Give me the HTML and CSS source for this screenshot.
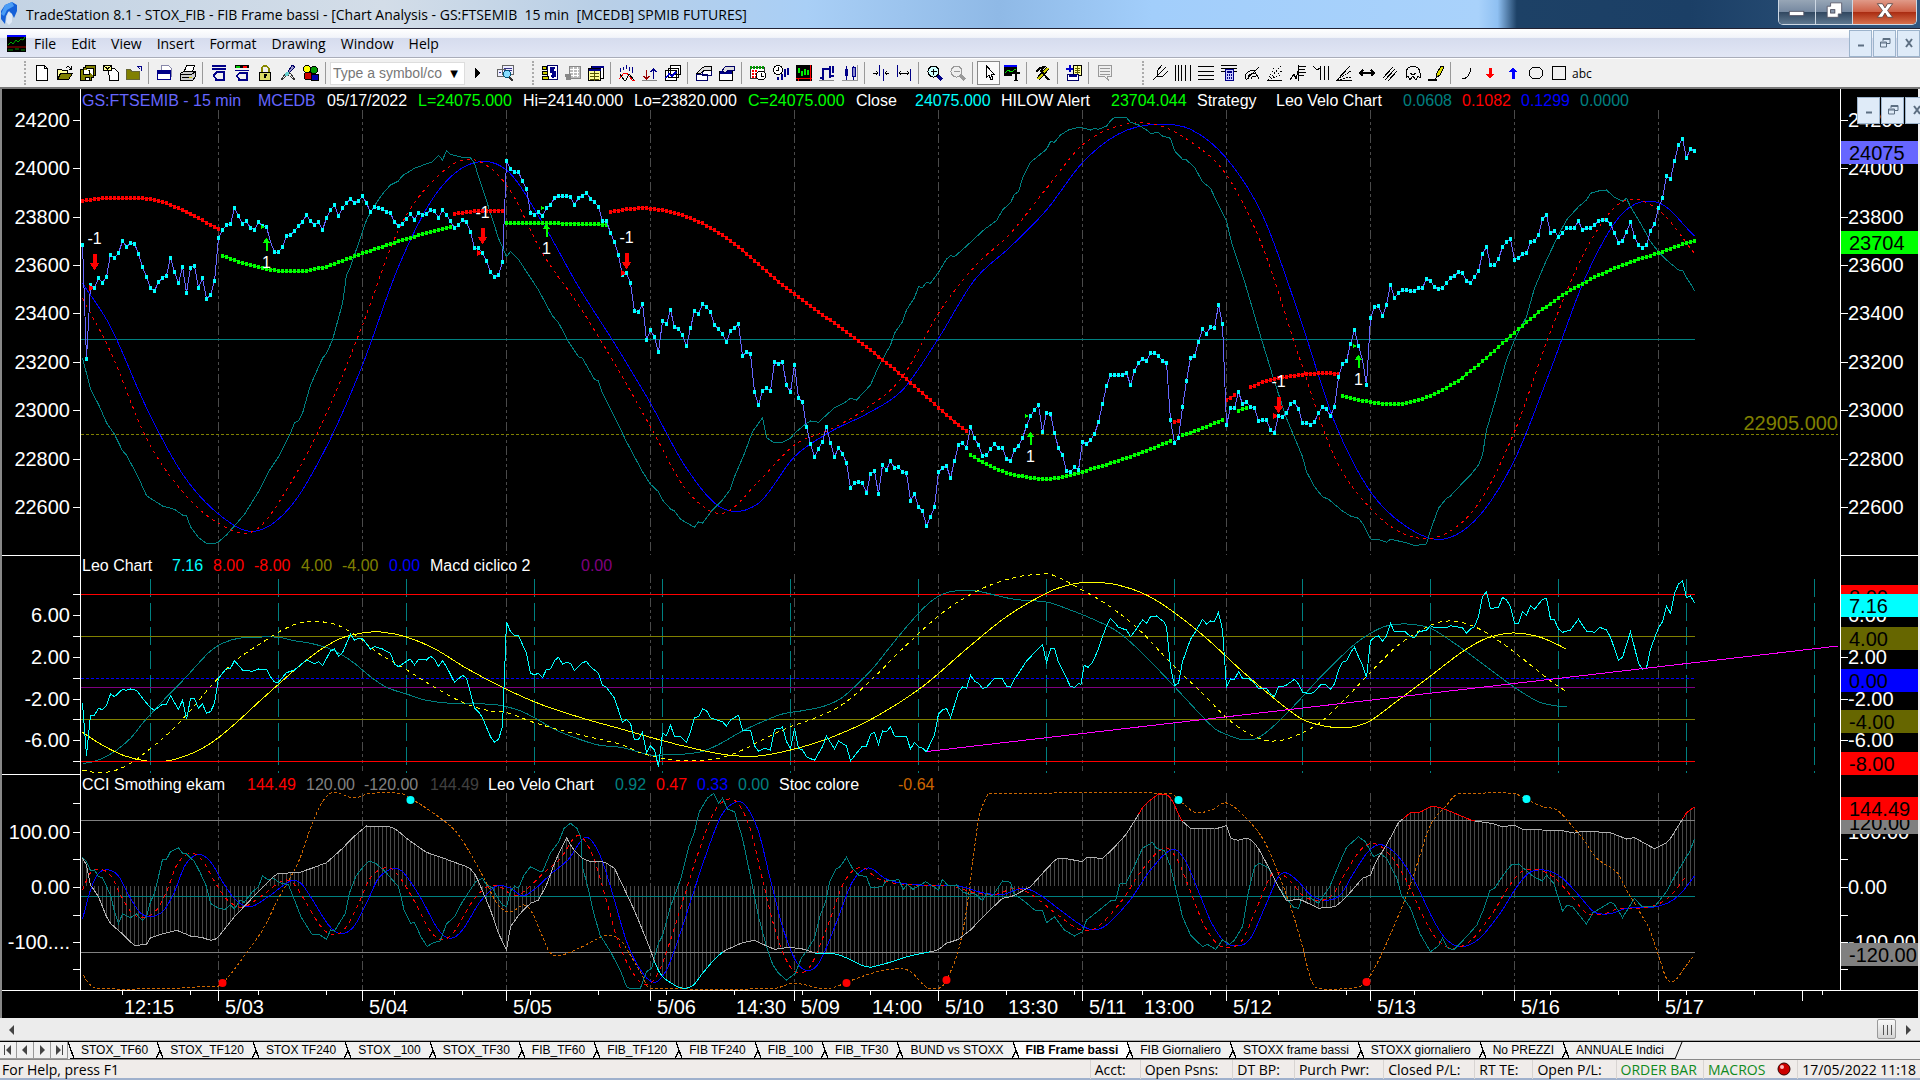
FILE: index.html
```html
<!DOCTYPE html>
<html lang="en">
<head>
  <meta charset="UTF-8">
  <title>TradeStation 8.1 - STOX_FIB</title>
  <meta name="viewport" content="width=device-width, initial-scale=1.0">
  <link rel="stylesheet" href="styles.css">
</head>
<body>
  <header class="titlebar">
    <svg class="app-logo" viewBox="0 0 18 24"><path d="M5 3 L12 0 L17 3 L17 9 L14 16 L12 12 L9 9 L6 14 L5 22 L1 17 L1 9 Z" fill="#1560d8"/><path d="M5 3 L12 0 L14 4 L7 8 L4 14 L1 12 Z" fill="#4a9cf5"/><path d="M8 10 L12 12 L12 20 L9 23 L6 20 Z" fill="#dfe9f7"/></svg>
    <h1>TradeStation 8.1 - STOX_FIB - FIB Frame bassi - [Chart Analysis - GS:FTSEMIB&nbsp; 15 min&nbsp; [MCEDB] SPMIB FUTURES]</h1>
    <div class="window-buttons">
      <button aria-label="Minimize"><svg viewBox="0 0 20 20"><rect x="1" y="11" width="17" height="5" fill="#fff" stroke="#556" /></svg></button>
      <button aria-label="Restore"><svg viewBox="0 0 20 20"><path d="M6 1h13v13h-4v4H2V5h4z" fill="#fff" stroke="#556"/><rect x="6" y="9" width="5" height="4" fill="#8a98ac" stroke="#445"/></svg></button>
      <button class="close" aria-label="Close"><svg viewBox="0 0 20 20"><path d="M1 2h6l3 5 3-5h6l-6 8 6 8h-6l-3-5-3 5H1l6-8z" fill="#fff" stroke="#544"/></svg></button>
    </div>
  </header>

  <nav class="menubar">
    <svg class="doc-icon" viewBox="0 0 19 17"><rect width="19" height="17" fill="#000"/><rect width="19" height="2" fill="#00f"/><path d="M1 10l3-3 2 2 3-4 2 2 3-3 2 1 2-3" stroke="#0a0" fill="none"/><path d="M0 12h19" stroke="#a00"/><path d="M1 15h5m2-1h4m2 1h4" stroke="#080"/></svg>
    <button>File</button>
    <button>Edit</button>
    <button>View</button>
    <button>Insert</button>
    <button>Format</button>
    <button>Drawing</button>
    <button>Window</button>
    <button>Help</button>
    <div class="mdi-buttons">
      <button aria-label="Minimize chart"><svg viewBox="0 0 12 12"><path d="M3 8.500h6" stroke-width="2"/></svg></button>
      <button aria-label="Restore chart"><svg viewBox="0 0 12 12"><path d="M4 4V1.500h7v5H8M1.500 5h6v5h-6zM4 2.500h7M1 6h7"/></svg></button>
      <button aria-label="Close chart"><svg viewBox="0 0 12 12"><path d="M3 2l6 8M9 2l-6 8" stroke-width="2"/></svg></button>
    </div>
  </nav>

  <div class="toolbar">
    <i class="grip"></i>
    <button aria-label="New"><svg viewBox="0 0 16 16"><path d="M2.500.5h8l3 3v12h-11z" fill="#fff" stroke="#000"/><path d="M10.500.5v3h3" fill="none" stroke="#000"/></svg></button>
    <button aria-label="Open"><svg viewBox="0 0 16 16"><path d="M.5 14.500v-10h4l1 1h5v3" fill="#ffffa0" stroke="#000"/><path d="M.5 14.500l3-6h12l-4 6z" fill="#808000" stroke="#000"/><path d="M9 3c2-3 4-1 4.500 1m-2 0h3V1" fill="none" stroke="#000"/></svg></button>
    <button aria-label="Save all"><svg viewBox="0 0 16 16"><path d="M5.500.5h10v10h-2v2h-2v3H.5v-11h2.500v-2h2.500z" fill="#808000" stroke="#000"/><path d="M3.500 5v4h6V5M5 15v-3h4v3M5.500 3h8v8" fill="#fff" stroke="#000"/></svg></button>
    <button aria-label="New from mail"><svg viewBox="0 0 16 16"><path d="M5.500 3.500h6l4 4v8h-9z" fill="#fff" stroke="#000"/><path d="M.5.5h8v5h-8z" fill="#ffff90" stroke="#000"/><path d="M1 1l3.500 3L8 1" fill="none" stroke="#000"/></svg></button>
    <button aria-label="Close workspace"><svg viewBox="0 0 16 16"><path d="M.5 14.500v-10h4l1 2h8v8z" fill="#808000" stroke="#663"/><path d="M15 6V1h-4m0 0l3 3" fill="none" stroke="#008"/></svg></button>
    <i class="sep"></i>
    <button aria-label="Print preview"><svg viewBox="0 0 16 16"><path d="M4.500.5h7l3 3v8h-10z" fill="#fff" stroke="#88a"/><path d="M.5 5.500h13v9H.5z" fill="#fff" stroke="#008"/><path d="M1 7h12" stroke="#008" stroke-width="3"/></svg></button>
    <button aria-label="Print"><svg viewBox="0 0 16 16"><path d="M4.500 6l2-5.500h8l-2 6" fill="#fff" stroke="#000"/><path d="M.5 8.500l3-2h12v5l-3 4H.5z" fill="#ccc" stroke="#000"/><path d="M1 9h11l3-2M2 12h9" fill="none" stroke="#000"/><path d="M9 12h3" stroke="#cc0"/></svg></button>
    <i class="sep"></i>
    <button aria-label="Insert row"><svg viewBox="0 0 16 16"><path d="M1 1h14M1 4h14" stroke="#008" stroke-width="2"/><path d="M4 15h9V7H6M2 11l4-4M2 11l4 3" fill="none" stroke="#008" stroke-width="1.500"/></svg></button>
    <button aria-label="Insert colour row"><svg viewBox="0 0 16 16"><path d="M1 1.500h14" stroke="#000" stroke-width="3"/><path d="M2 1.500h4" stroke="#0c0" stroke-width="2"/><path d="M9 1.500h4" stroke="red" stroke-width="2"/><path d="M1 5h14" stroke="#008"/><path d="M4 15h9V8H6M2 11l4-3M2 11l4 3" fill="none" stroke="#008" stroke-width="1.500"/></svg></button>
    <button aria-label="Lock"><svg viewBox="0 0 16 16"><path d="M4.500 8V3l2-2h3l2 2v5" fill="none" stroke="#880" stroke-width="2"/><path d="M2.500 7.500h11v8h-11z" fill="#dd6" stroke="#000"/><path d="M8 9v4M6.500 10h3" stroke="#000" stroke-width="2"/></svg></button>
    <button aria-label="Data link"><svg viewBox="0 0 16 16"><path d="M8 7L12 0l3 2-5 5z" fill="#99c" stroke="#006"/><path d="M1 15l4-6 3-2 3 2 4 6M2 15l4-4m4 0l4 4M8 8v3" fill="none" stroke="#333"/><circle cx="7" cy="9" r="2" fill="#6cc"/></svg></button>
    <button aria-label="Shapes"><svg viewBox="0 0 16 16"><circle cx="4" cy="4" r="3.500" fill="#ff0" stroke="#000"/><circle cx="11" cy="5" r="3.500" fill="#090" stroke="#000"/><circle cx="5" cy="11" r="4" fill="#c00" stroke="#000"/><path d="M8 9h7v6.500H9z" fill="#00a" stroke="#000"/></svg></button>
    <i class="sep"></i>
    <div class="symbol-box">
      <input type="text" aria-label="Symbol" placeholder="Type a symbol/co">
      <button aria-label="Symbol list">▼</button>
    </div>
    <button class="go" aria-label="Go"><svg viewBox="0 0 16 16"><path d="M6 3l5 5-5 5z"/></svg></button>
    <button class="lookup" aria-label="Symbol lookup"><svg viewBox="0 0 18 16"><path d="M.5 4.500h8v7h-8zM5.500 .5h11v9h-11z" fill="#eef" stroke="#666"/><path d="M7 3h8M7 5h8M2 7h2" stroke="#338"/><circle cx="10" cy="9" r="3.500" fill="#8df" stroke="#057"/><path d="M12 12l4 3.500" stroke="#333" stroke-width="2"/></svg></button>
    <i class="grip"></i>
    <button aria-label="Order bar"><svg viewBox="0 0 16 16"><path d="M5.500.5h10v14h-10z" fill="#fff" stroke="#006"/><path d="M11 2v11m2-10H9v4h4v4H9" fill="none" stroke="#008" stroke-width="1.500"/><path d="M.5 1.500h4v3h-4zM.5 6.500h5v3h-5zM.5 11.500h6v3h-6z" fill="#cc0" stroke="#000"/></svg></button>
    <button aria-label="Trade manager" disabled><svg viewBox="0 0 16 16"><path d="M4 1h11v12H4z" fill="#bbb" stroke="#888"/><path d="M5 4h9M5 7h9M5 10h9M8 2v10M12 2v10" stroke="#fff"/><path d="M0 9h6v6H1z" fill="#888"/></svg></button>
    <button aria-label="Spreadsheet"><svg viewBox="0 0 16 16"><path d="M3.500 1.500h12v12h-12z" fill="#fff" stroke="#000"/><path d="M.5 3.500h12v12H.5z" fill="#ff9" stroke="#000"/><path d="M1 4.500h12M3.500 1.500h12" stroke="#008" stroke-width="2"/><path d="M2 8h9M2 11h9M2 14h9M6 6v10" stroke="#550"/></svg></button>
    <i class="sep"></i>
    <button aria-label="Indicator"><svg viewBox="0 0 16 16"><path d="M1.500 3v4M4.500 2v3M7.500 0v4M10.500 2v4M13.500 2v6" stroke="#008"/><path d="M0 14l5-6h3l5 7h3" fill="none" stroke="red"/><path d="M1 9l4 6h2l3-6 5 6" fill="none" stroke="#000"/></svg></button>
    <button aria-label="Strategy"><svg viewBox="0 0 16 16"><path d="M4.500 5v9M2 11l2.500 3L7 11" fill="none" stroke="#900" stroke-width="1.500"/><path d="M11.500 14V4M9 7l2.500-3L14 7" fill="none" stroke="#008" stroke-width="1.500"/><path d="M0 15.500h15" stroke="#888"/></svg></button>
    <button aria-label="Analysis techniques"><svg viewBox="0 0 16 16"><path d="M5.500.5h10v9h-10zM3.500 3.500h10v9h-10zM.5 5.500h11v10H.5z" fill="#fff" stroke="#000"/><path d="M1 13l3-4 3 2 4-4" fill="none" stroke="#00c" stroke-width="1.500"/></svg></button>
    <i class="sep"></i>
    <button aria-label="Format analysis"><svg viewBox="0 0 16 16"><path d="M6.500 3.500h9v7h-9zM.5 9.500h11v6H.5z" fill="#fff" stroke="#006"/><path d="M1 8l5-5 4-2h5v4H9L5 8z" fill="#ddd" stroke="#000"/></svg></button>
    <button aria-label="Format window"><svg viewBox="0 0 16 16"><path d="M.5 6.500h13v9H.5z" fill="#fff" stroke="#000"/><path d="M1 7.500h12" stroke="#008" stroke-width="3"/><path d="M3 6l3-4 4-1h5v4h-5L6 8z" fill="#ddd" stroke="#006"/></svg></button>
    <i class="sep"></i>
    <button aria-label="Calendar"><svg viewBox="0 0 16 16"><path d="M.5 2.500h14v11H.5z" fill="#fff" stroke="#333"/><path d="M0 2h15" stroke="#090" stroke-width="3" stroke-dasharray="2 1"/><path d="M2 6h6M2 9h4M2 12h4" stroke="red" stroke-width="2" stroke-dasharray="2 1"/><circle cx="11" cy="10.500" r="4.500" fill="#fff" stroke="#000"/><path d="M11 8v3h3" fill="none" stroke="#000"/></svg></button>
    <button aria-label="Session times"><svg viewBox="0 0 16 16"><circle cx="5" cy="5" r="4.500" fill="#fff" stroke="#000"/><path d="M5 2v3H3" fill="none" stroke="#000"/><path d="M4.500 12v3M8.500 9v6M11.500 4v8M14.500 3v7" stroke="#008" stroke-width="2"/></svg></button>
    <button aria-label="Chart colours"><svg viewBox="0 0 16 16"><path d="M0 0h16v16H0z"/><path d="M0 13h16M2 16v-3m12-13v16" stroke="red"/><path d="M3 3v5M6 6v5M9 4v6M12 5v5" stroke="#0e0" stroke-width="1.500"/></svg></button>
    <button aria-label="Bar chart"><svg viewBox="0 0 16 16"><path d="M4 3v12M11 1v12M1 13h3M4 4h7M11 11h4M14 1v7" stroke="#008" stroke-width="2"/><path d="M0 15.500h15" stroke="#888"/></svg></button>
    <button aria-label="Candles"><svg viewBox="0 0 16 16"><path d="M4.500 1v14M11.500 1v14" stroke="#008"/><path d="M3 4h3v7H3z" fill="#008"/><path d="M10 2h3v9h-3z" fill="#88c" stroke="#008"/><path d="M15.500 0v16M0 15.500h15" stroke="#999"/></svg></button>
    <i class="sep"></i>
    <button aria-label="Less spacing"><svg viewBox="0 0 16 16"><path d="M6.500 0v11M10.500 4v12" stroke="#008"/><path d="M0 8h5M3 6l2 2-2 2M16 8h-4M14 6l-2 2 2 2" fill="none" stroke="#000"/></svg></button>
    <button aria-label="More spacing"><svg viewBox="0 0 16 16"><path d="M1.500 0v12M14.500 4v12" stroke="#008"/><path d="M3 8h10M5 6L3 8l2 2M11 6l2 2-2 2" fill="none" stroke="#000"/></svg></button>
    <i class="sep"></i>
    <button aria-label="Zoom in"><svg viewBox="0 0 16 16"><circle cx="6.500" cy="6.500" r="5.500" fill="#cff" stroke="#000"/><path d="M3.500 6.500h6M6.500 3.500v6" stroke="#000" stroke-width="1.500"/><path d="M11 11l4 4" stroke="#008" stroke-width="3"/></svg></button>
    <button aria-label="Zoom out" disabled><svg viewBox="0 0 16 16"><circle cx="6.500" cy="6.500" r="5.500" fill="#eee" stroke="#999"/><path d="M3.500 6.500h6" stroke="#999" stroke-width="1.500"/><path d="M11 11l4 4" stroke="#999" stroke-width="3"/></svg></button>
    <i class="sep"></i>
    <button class="pressed" aria-label="Pointer"><svg viewBox="0 0 16 16"><path d="M5.500 1v11l2.500-2 2 5 2-1-2-5h3z" fill="#fff" stroke="#000"/></svg></button>
    <button aria-label="Text tracking"><svg viewBox="0 0 16 16"><path d="M0 0h13v11H0z"/><path d="M0 1h13" stroke="#00f" stroke-width="2"/><path d="M1 8l3-3 3 2 5-3" fill="none" stroke="#0d0"/><path d="M8 7h8v9H8z" fill="#f0f0f0"/><path d="M8 8h8M12 8v8M10 15.500h4" stroke="#000" stroke-width="2"/></svg></button>
    <i class="sep"></i>
    <button aria-label="Tools"><svg viewBox="0 0 16 16"><path d="M3 14L13 3" stroke="#000" stroke-width="4"/><path d="M3 14L13 3" stroke="#cc0" stroke-width="2"/><path d="M1 7l4-4 4-1-3 4 8 9" fill="none" stroke="#000" stroke-width="2"/></svg></button>
    <i class="sep"></i>
    <button aria-label="Add to workspace"><svg viewBox="0 0 16 16"><path d="M3.500 0v7M0 3.500h7" stroke="#00c" stroke-width="2"/><path d="M7.500.5h8v10h-8z" fill="#ff9" stroke="#000"/><path d="M9 3h5M9 5h5M9 7h5M11.500 1v9" stroke="#660"/><path d="M1.500 9.500h11v6h-11z" fill="#fff" stroke="#006"/><path d="M3 11h8" stroke="#008" stroke-width="2"/></svg></button>
    <i class="sep"></i>
    <button aria-label="Notes" disabled><svg viewBox="0 0 16 16"><path d="M1.500.5h13v11h-4l1 4-4-4h-6z" fill="#eee" stroke="#999"/><path d="M3 3h10M3 6h10M3 9h10" stroke="#999"/></svg></button>
    <i class="grip far"></i>
    <button aria-label="Andrews pitchfork"><svg viewBox="0 0 16 16"><path d="M1 15L14 2M5 11V6l5-6M5 11h6l5-5" fill="none" stroke="#000"/></svg></button>
    <button aria-label="Cycle lines"><svg viewBox="0 0 16 16"><path d="M.5 0v16M3.500 0v16M6.500 0v16M10.500 0v16M15.500 0v16" stroke="#000"/></svg></button>
    <button aria-label="Horizontal lines"><svg viewBox="0 0 16 16"><path d="M0 1.500h16M0 6.500h16M0 10.500h16M0 14.500h16" stroke="#000"/></svg></button>
    <button aria-label="Price calculator"><svg viewBox="0 0 16 16"><path d="M0 .5h16M0 3.500h16M0 6.500h16" stroke="#000"/><path d="M4.500 4.500h8v11h-8z" fill="#ccf" stroke="#008"/><path d="M6 7h5M6 10h1m1 0h1m1 0h1M6 13h1m1 0h1m1 0h1" stroke="#008" stroke-width="2"/></svg></button>
    <button aria-label="Speed arcs"><svg viewBox="0 0 16 16"><path d="M1 14c0-6 4-9 9-9M4 14c0-4 3-6 7-6M7 14c0-2 2-3 5-3M2 15L15 2M10 5l5 9" fill="none" stroke="#000"/></svg></button>
    <button aria-label="Gann fan"><svg viewBox="0 0 16 16"><path d="M0 15.500h15" stroke="#000"/><path d="M1 15L14 1M1 15L15 6M1 15l14-5M1 15L8 1" stroke="#000" stroke-dasharray="1 2"/></svg></button>
    <button aria-label="Retracement"><svg viewBox="0 0 16 16"><path d="M0 15l4-6 2 5 3-12M8.500 0v16M9 1.500h7M9 4.500h6M9 7.500h7M9 10.500h5" fill="none" stroke="#000"/></svg></button>
    <button aria-label="Time extension"><svg viewBox="0 0 16 16"><path d="M0 1l4 4 3-2M7.500 1v14M11.500 1v14M15.500 1v14" fill="none" stroke="#000"/></svg></button>
    <button aria-label="Fan lines"><svg viewBox="0 0 16 16"><path d="M0 15.500h16M1 15L14 1" stroke="#000"/><path d="M1 15L15 6M1 15l14-3" stroke="#000" stroke-dasharray="2 1"/></svg></button>
    <button aria-label="Extend"><svg viewBox="0 0 16 16"><path d="M1 8h14M4 5L1 8l3 3M12 5l3 3-3 3" fill="none" stroke="#000" stroke-width="1.500"/></svg></button>
    <button aria-label="Parallel lines"><svg viewBox="0 0 16 16"><path d="M1 13L11 2M3 15L13 4M6 16L15 6" stroke="#000"/></svg></button>
    <button aria-label="Arc"><svg viewBox="0 0 16 16"><path d="M1 13V8c0-9 14-9 14 0v5M1 13l2-2 2 4 3-4 3 4 2-4 2 2M5 8l3 2 3-2" fill="none" stroke="#000"/></svg></button>
    <button aria-label="Pencil"><svg viewBox="0 0 16 16"><path d="M0 14.500h9" stroke="#000" stroke-width="2"/><path d="M8 13l1-5 4-7 3 1-4 8z" fill="#dd0" stroke="#000"/></svg></button>
    <i class="sep"></i>
    <button aria-label="Curve"><svg viewBox="0 0 16 16"><path d="M3 14c6 0 8-5 9-11" fill="none" stroke="#000"/></svg></button>
    <button aria-label="Arrow down"><svg viewBox="0 0 16 16"><path d="M6.500 3h3v6h3L8 14 3.500 9h3z" fill="red"/></svg></button>
    <button aria-label="Arrow up"><svg viewBox="0 0 16 16"><path d="M6.500 14h3V7h3L8 3 3.500 7h3z" fill="#00f"/></svg></button>
    <button aria-label="Ellipse"><svg viewBox="0 0 16 16"><ellipse cx="8" cy="8" rx="7" ry="6" fill="none" stroke="#000"/></svg></button>
    <button aria-label="Rectangle"><svg viewBox="0 0 16 16"><path d="M1.500 1.500h13v13h-13z" fill="none" stroke="#000"/></svg></button>
    <button class="abc" aria-label="Text">abc</button>
  </div>

  <main class="chart-window">
    <svg id="chart" viewBox="0 89 1920 929" role="img" aria-label="GS:FTSEMIB 15 min chart"></svg>
    <div class="mdi-buttons floating">
      <button aria-label="Minimize window"><svg viewBox="0 0 12 12"><path d="M3 8.500h6" stroke-width="2"/></svg></button>
      <button aria-label="Restore window"><svg viewBox="0 0 12 12"><path d="M4 4V1.500h7v5H8M1.500 5h6v5h-6zM4 2.500h7M1 6h7"/></svg></button>
      <button aria-label="Close window"><svg viewBox="0 0 12 12"><path d="M3 2l6 8M9 2l-6 8" stroke-width="2"/></svg></button>
    </div>
  </main>

  <div class="scrollbar">
    <button aria-label="Scroll left"><svg viewBox="0 0 10 10"><path d="M7 0v10L2 5z"/></svg></button>
    <button class="thumb" aria-label="Scroll position"><svg viewBox="0 0 10 10"><path d="M1.500 0v10M5.500 0v10M9.500 0v10" stroke="#555"/></svg></button>
    <button aria-label="Scroll right"><svg viewBox="0 0 10 10"><path d="M3 0v10l5-5z"/></svg></button>
  </div>

  <nav class="tabs">
    <div class="tab-nav">
      <button aria-label="First tab"><svg viewBox="0 0 10 10"><path d="M8 0v10L3 5zM1 0h1v10H1z"/></svg></button>
      <button aria-label="Previous tab"><svg viewBox="0 0 10 10"><path d="M7 0v10L2 5z"/></svg></button>
      <button aria-label="Next tab"><svg viewBox="0 0 10 10"><path d="M3 0v10l5-5z"/></svg></button>
      <button aria-label="Last tab"><svg viewBox="0 0 10 10"><path d="M2 0v10l5-5zM8 0h1v10H8z"/></svg></button>
    </div>
    <a href="#">STOX_TF60</a>
    <a href="#">STOX_TF120</a>
    <a href="#">STOX TF240</a>
    <a href="#">STOX _100</a>
    <a href="#">STOX_TF30</a>
    <a href="#">FIB_TF60</a>
    <a href="#">FIB_TF120</a>
    <a href="#">FIB TF240</a>
    <a href="#">FIB_100</a>
    <a href="#">FIB_TF30</a>
    <a href="#">BUND vs STOXX</a>
    <a href="#" class="active">FIB Frame bassi</a>
    <a href="#">FIB Giornaliero</a>
    <a href="#">STOXX frame bassi</a>
    <a href="#">STOXX giornaliero</a>
    <a href="#">No PREZZI</a>
    <a href="#">ANNUALE Indici</a>
    <svg class="tab-end" viewBox="0 0 8 17"><path d="M0 17L7 0"/></svg>
  </nav>

  <footer class="statusbar">
    <span class="help">For Help, press F1</span>
    <span>Acct:</span>
    <span>Open Psns:</span>
    <span>DT BP:</span>
    <span>Purch Pwr:</span>
    <span>Closed P/L:</span>
    <span>RT TE:</span>
    <span>Open P/L:</span>
    <span class="link">ORDER BAR</span>
    <span class="link">MACROS</span>
    <svg viewBox="0 0 14 14"><circle cx="7" cy="7" r="6" fill="#c00" stroke="#300"/><circle cx="5" cy="5" r="2" fill="#fbb"/></svg>
    <span class="clock">17/05/2022 11:18</span>
  </footer>

  <script src="chart.js"></script>
</body>
</html>
```
FILE: styles.css
```css
* {
  box-sizing: border-box;
}

body {
  margin: 0;
  display: flex;
  flex-direction: column;
  background: #f0f0f0;
  color: #000;
  font-family: "Open Sans", sans-serif;
  font-size: 14px;
}

button {
  padding: 0;
  border: none;
  background: none;
  color: inherit;
  font: inherit;
}

/* title bar */
.titlebar {
  display: flex;
  align-items: center;
  height: 29px;
  border-bottom: 1px solid #223;
  background: linear-gradient(90deg, #c3d3e4 0, #d3dde8 20%, #b9cfe6 31%, #a9cff6 42%, #8fb9e6 52%, #a2cefb 60%, #a9d2fb 77%, #8fc0f2 78%, #1d4166 79%, #1b3f66 88%, #31577f 100%);
}

.app-logo {
  width: 18px;
  height: 24px;
}

.titlebar h1 {
  flex: 1;
  margin: 0 0 0 8px;
  font-size: 14px;
  font-weight: normal;
  white-space: nowrap;
}

.window-buttons {
  display: flex;
  align-self: flex-start;
  height: 25px;
  margin-right: 3px;
  border: 1px solid #cdd8e4;
  border-top: none;
  border-radius: 0 0 5px 5px;
  overflow: hidden;
}

.window-buttons button {
  width: 37px;
  border-right: 1px solid #cdd8e4;
  background: linear-gradient(#97a6b6 0, #7588a0 50%, #30465f 50%, #5f7890 100%);
}

.window-buttons .close {
  width: 63px;
  border-right: none;
  background: linear-gradient(#e09a88 0, #cd5f45 50%, #a92a10 50%, #d8704c 100%);
}

.window-buttons svg {
  width: 18px;
  height: 17px;
}

/* menu */
.menubar {
  display: flex;
  align-items: center;
  gap: 15px;
  height: 29px;
  padding-left: 7px;
  border-bottom: 1px solid #a9adb9;
  background: linear-gradient(#fff 0, #f2f4fa 30%, #d6dcee 34%, #e2e7f5 100%);
}

.doc-icon {
  width: 19px;
  height: 17px;
  margin-right: -7px;
}

.mdi-buttons {
  display: flex;
  gap: 1px;
  height: 27px;
  margin-left: auto;
}

.mdi-buttons button {
  width: 23px;
  border: 1px solid #9db4cc;
  background: #dfebf8;
}

.mdi-buttons svg {
  width: 12px;
  height: 12px;
  fill: none;
  stroke: #5d6f82;
}

.mdi-buttons.floating {
  position: absolute;
  top: 8px;
  right: -8px;
}

/* toolbar */
.toolbar {
  display: flex;
  align-items: center;
  height: 31px;
  padding-left: 24px;
  border-top: 1px solid #fff;
  border-bottom: 2px solid #777;
  background: #f0f0f0;
}

.toolbar button {
  flex: none;
  width: 23px;
  height: 24px;
}

.toolbar button svg {
  display: block;
  width: 16px;
  height: 16px;
  margin: 0 auto;
  shape-rendering: crispEdges;
}

.toolbar .pressed {
  border: 1px solid #888;
  background: #fafafa;
}

.toolbar .abc {
  width: 24px;
  font-size: 12px;
}

.grip {
  width: 6px;
  height: 24px;
  border-left: 2px dotted #aaa;
}

.grip.far {
  margin-left: 26px;
}

.sep {
  width: 8px;
  height: 22px;
  background: linear-gradient(90deg, transparent 3px, #999 3px, #999 4px, transparent 4px);
}

.symbol-box {
  display: flex;
  width: 135px;
  height: 23px;
  border: 1px solid #ddd;
  background: #fff;
}

.symbol-box input {
  flex: 1;
  min-width: 0;
  padding: 0 0 0 2px;
  border: none;
  background: none;
  font: 14px "Liberation Sans", sans-serif;
}

.symbol-box input::placeholder {
  color: #777;
  opacity: 1;
}

.toolbar .symbol-box button {
  width: 20px;
  height: 21px;
  font: 10px "DejaVu Sans", sans-serif;
}

.toolbar .lookup {
  width: 36px;
  margin-right: 8px;
}

.toolbar .lookup svg {
  width: 18px;
}

/* chart */
.chart-window {
  position: relative;
  overflow: hidden;
  background: #000;
}

#chart {
  display: block;
  width: 100%;
  height: auto;
  font-family: "Liberation Sans", Arial, sans-serif;
}

#chart line,
#chart path,
#chart rect,
#chart polyline {
  shape-rendering: crispEdges;
}

#chart .legend {
  font-size: 16px;
}

#chart .axis,
#chart .mark {
  font-size: 20px;
  fill: #fff;
}

#chart .mark {
  font-size: 16px;
}

/* scrollbar */
.scrollbar {
  display: flex;
  align-items: center;
  height: 23px;
  border-bottom: 1px solid #aaa;
  background: #ececec;
}

.scrollbar button {
  width: 24px;
  height: 20px;
}

.scrollbar svg,
.tab-nav svg {
  width: 10px;
  height: 10px;
  fill: #444;
}

.scrollbar .thumb {
  width: 19px;
  margin-left: auto;
  border: 1px solid #999;
  border-radius: 2px;
  background: linear-gradient(#f8f8f8, #d4d4d4);
}

/* workspace tabs */
.tabs {
  display: flex;
  height: 19px;
  border-top: 1px solid #000;
  border-bottom: 1px solid #888;
  background: #f0f0f0;
  font: 12px/17px "Liberation Sans", Arial, sans-serif;
}

.tab-nav {
  display: flex;
  margin-right: 2px;
}

.tab-nav button {
  width: 17px;
  border: 1px solid #999;
  border-width: 0 1px 1px 0;
  line-height: 10px;
}

.tabs a {
  position: relative;
  padding: 0 11px;
  border-bottom: 1px solid #000;
  color: #000;
  text-decoration: none;
  white-space: nowrap;
}

/* slanted edges between two tabs */
.tabs a::before,
.tabs a::after {
  content: "";
  position: absolute;
  top: 0;
  left: -2px;
  width: 6px;
  height: 17px;
  background: linear-gradient(to top right, transparent 45%, #000 45%, #000 57%, transparent 57%);
}

.tabs a::after {
  top: 8px;
  left: -3px;
  width: 4px;
  height: 9px;
  background: linear-gradient(to bottom right, transparent 42%, #000 42%, #000 60%, transparent 60%);
}

.tabs a:first-of-type::after {
  display: none;
}

.tabs .active {
  background: #fff;
  font-weight: bold;
}

.tab-end {
  width: 8px;
  height: 17px;
  fill: none;
  stroke: #000;
}

/* status bar */
.statusbar {
  display: flex;
  align-items: center;
  height: 20px;
  border-bottom: 2px solid #9fb0cc;
  background: #f0ecea;
  white-space: nowrap;
}

.statusbar span {
  padding: 0 14px 0 4px;
  border-left: 1px solid #d8d4d2;
}

.statusbar .help {
  margin-right: auto;
  padding-left: 2px;
  border-left: none;
}

.statusbar .link {
  padding: 0 6px 0 4px;
  color: #118a1e;
}

.statusbar .clock {
  padding: 0 4px;
}

.statusbar svg {
  width: 14px;
  height: 14px;
  margin: 0 6px;
}
```
FILE: chart.js
```js
var svg = document.getElementById('chart');
var LAST = 403;                       // last bar
var LEFT = 80.5, RIGHT = 1840.5;

function el(name, attrs, text) {
  var e = document.createElementNS('http://www.w3.org/2000/svg', name);
  for (var k in attrs) e.setAttribute(k, attrs[k]);
  if (text !== undefined) e.textContent = text;
  svg.appendChild(e);
  return e;
}

// a bar is 4px wide, heights are kept in thirds of a pixel below the panel top
function bx(bar) { return 82.5 + bar * 4; }
function py(top, v) { return top + v / 3; }

function pairs(s) {
  return s.trim().split(/\s+/).map(function (p) { return p.split(',').map(Number); });
}

function hline(y, color, x2, dash) {
  var a = { x1: LEFT, x2: x2 || bx(LAST), y1: y, y2: y, stroke: color };
  if (dash) a['stroke-dasharray'] = dash;
  el('line', a);
}

function vline(x, y1, y2, color, dash) {
  var a = { x1: x, x2: x, y1: y1, y2: y2, stroke: color };
  if (dash) a['stroke-dasharray'] = dash;
  el('line', a);
}

function jagged(top, pts, color) {
  el('polyline', {
    points: pts.map(function (p) { return bx(p[0]) + ',' + py(top, p[1]).toFixed(1); }).join(' '),
    fill: 'none', stroke: color
  });
}

function smooth(top, pts, color, dash) {
  var q = pts.map(function (p) { return [bx(p[0]), py(top, p[1])]; });
  var d = 'M' + q[0];
  for (var i = 0; i < q.length - 1; i++) {
    var a = q[i - 1] || q[i], b = q[i], c = q[i + 1], e = q[i + 2] || c;
    // tangents are scaled to the segment so unequal steps do not overshoot
    var w = c[0] - b[0];
    var m1 = (c[1] - a[1]) / ((c[0] - a[0]) || 1), m2 = (e[1] - b[1]) / ((e[0] - b[0]) || 1);
    d += 'C' + [b[0] + w / 3, b[1] + m1 * w / 3, c[0] - w / 3, c[1] - m2 * w / 3, c[0], c[1]]
      .map(function (n) { return n.toFixed(1); }).join(' ');
  }
  var at = { d: d, fill: 'none', stroke: color };
  if (dash) at['stroke-dasharray'] = dash;
  el('path', at);
}

function at(pts, bar) {
  for (var i = 1; i < pts.length; i++) {
    if (bar <= pts[i][0]) {
      var a = pts[i - 1], b = pts[i];
      return a[1] + (b[1] - a[1]) * (bar - a[0]) / (b[0] - a[0]);
    }
  }
  return pts[pts.length - 1][1];
}

function every9(first, values) {
  return values.map(function (v, i) { return [first + i * 9, v]; });
}

function legend(y, items) {
  items.forEach(function (t) {
    el('text', { x: t[0], y: y, fill: t[1], 'class': 'legend' }, t[2]);
  });
}

function axis(top, labels, ticks) {
  labels.forEach(function (l) {
    el('text', { x: 70, y: py(top, l[0]) + 7, 'text-anchor': 'end', 'class': 'axis' }, l[2] || l[1]);
    el('text', { x: 1848, y: py(top, l[0]) + 7, 'class': 'axis' }, l[1]);
  });
  ticks.forEach(function (v) {
    var y = Math.round(py(top, v)) + 0.5;
    el('line', { x1: 73, x2: 80, y1: y, y2: y, stroke: '#fff' });
    el('line', { x1: 1841, x2: 1848, y1: y, y2: y, stroke: '#fff' });
  });
}

function tag(y, color, text) {
  el('rect', { x: 1841, y: y, width: 77, height: 23, fill: color });
  el('text', { x: 1849, y: y + 19, 'font-size': 20 }, text);
}

/* ---------- grid ---------- */
for (var b = 34; b <= 394; b += 36) {
  [[110, 555], [574, 771], [793, 990]].forEach(function (r) {
    vline(bx(b), r[0], r[1], '#4a4a4a', '9 3 3 3 3 3');
  });
}

/* ---------- price panel ---------- */
var P1 = 110;
hline(339.5, '#008080');
hline(434.5, '#808000', 1838, '3 2');

smooth(P1, [[0, 520]].concat(every9(7, [
  650, 893, 1092, 1212, 1264, 1190, 1010, 765, 470, 258, 162, 180, 338, 530, 700, 880, 1075, 1195, 1180,
  1040, 965, 912, 840, 685, 510, 410, 300, 158, 72, 43, 58, 145, 315, 610, 935, 1145, 1250, 1288, 1220,
  1050, 780, 495, 310, 278, 378])), '#0000ff');
smooth(P1, [[0, 565]].concat(every9(7, [
  725, 985, 1145, 1240, 1262, 1120, 910, 645, 360, 208, 148, 225, 430, 585, 760, 950, 1140, 1210, 1115,
  1005, 958, 895, 800, 610, 470, 370, 235, 105, 48, 43, 95, 195, 410, 735, 1040, 1195, 1275, 1275, 1180,
  965, 665, 415, 275, 300, 430])), '#ff0000', '3 4');

jagged(P1, pairs(`0,745 1,790 2,838 4,883 6,938 8,973 10,1022 11,1035 14,1103 16,1157 20,1188 23,1198 25,1215
26,1217 27,1250 29,1283 31,1300 33,1302 34,1295 36,1275 40.5,1213 44,1145 46.5,1085 49,1040 52,970 53,938 54,932
55,910 57,825 60,745 61,730 62.5,690 65,580 66,495 67,470 69,400 71,330 73,287 75,252 77,225 79,213 80,197
83,175 85,166 87.5,155 89,136 90,150 91,122 92,133 95,142 97,143 98,160 99,200 100,235 102,310 104,385 106,440
107,425 109,448 111,485 114,540 117.5,618 119,638 121.5,695 124,740 125,745 128,808 129,813 130,850 133,920
136,995 140,1085 142,1123 144,1145 145,1170 147,1197 148,1203 149.5,1228 151,1238 153,1252 154,1235 155,1240
157.5,1200 160,1170 162,1137 163,1100 165.5,1030 167.5,965 170,923 171,983 173,999 175,997 177,985 178,970
181,940 182,933 184,937 186,915 188,893 190.5,878 192,865 193.5,870 197,825 199,770 202,705 203,670 205,635
206,600 208,563 209,530 210,533 211,517 212,520 214,487 216,447 217,437 218,440 221,408 225.5,358 228.5,332
230,300 232,278 233,253 234,245 235,205 237,157 239,137 241,118 242,95 243,97 244.5,75 246.5,60 249,52 250.5,55
252,60 253,55 254,58 256,48 257,33 258,22 261,23 262,37 264,45 266,60 267,70 269,68 270,78 272,85 273,122
275,148 276,150 278,172 280,215 282,235 284,285 286,333 287.3,400 290.4,510 294.8,690 298,815 301,925 305,1040
306,1085 308,1130 310,1160 311.5,1168 315,1203 317,1218 319,1225 320,1240 322,1287 324,1288 326,1297 327,1288
329,1293 331,1298 333,1307 336,1302 337,1260 339,1195 341,1165 342,1158 343.5,1138 347,1095 349,1065 350,1035
351,960 353,880 356,750 358,690 361,620 363,535 366,450 369,375 371,330 374,290 376,270 377,250 379,243 381,240
383,262 385,273 386,265 387,290 389,330 390,350 392,395 394,425 396,450 399,480 400,481 401,503 402.5,530
403,543`), '#008080');

var price = [
  405, 747, 525, 534, 504, 518, 500, 434, 444, 429, 393, 410, 399, 401, 432, 471, 500, 534, 543, 516, 504, 497,
  443, 486, 518, 471, 548, 474, 467, 534, 504, 566, 555, 513, 384, 360, 345, 342, 294, 318, 342, 333, 354, 359,
  335, 348, 351, 395, 426, 426, 411, 378, 375, 363, 348, 336, 315, 333, 345, 335, 360, 324, 300, 285, 318, 294,
  279, 267, 279, 273, 258, 279, 306, 290, 294, 297, 306, 309, 336, 348, 342, 327, 312, 329, 308, 315, 312, 300,
  304, 323, 299, 315, 333, 354, 345, 330, 336, 366, 414, 414, 429, 453, 486, 501, 495, 456, 153, 177, 186, 186,
  213, 237, 308, 315, 306, 318, 294, 285, 264, 258, 258, 258, 260, 285, 264, 258, 248, 267, 276, 291, 333, 333,
  369, 396, 435, 495, 489, 519, 603, 606, 581, 690, 660, 682, 726, 633, 642, 600, 651, 657, 675, 708, 654, 603,
  612, 582, 591, 606, 645, 657, 672, 696, 663, 654, 642, 738, 726, 732, 846, 885, 843, 834, 843, 756, 762, 756,
  825, 846, 765, 863, 876, 951, 1001, 1041, 1016, 995, 951, 999, 1041, 1014, 1031, 1059, 1134, 1119, 1116, 1119,
  1149, 1091, 1083, 1152, 1065, 1080, 1053, 1074, 1071, 1086, 1089, 1172, 1152, 1191, 1203, 1248, 1221, 1191,
  1086, 1074, 1068, 1104, 1053, 1004, 999, 1014, 951, 984, 1005, 1038, 1035, 1017, 1002, 1014, 1014, 1047, 1053,
  1020, 1008, 984, 948, 918, 900, 885, 967, 909, 912, 969, 1014, 1035, 1083, 1086, 1071, 1080, 996, 1002, 990,
  972, 936, 882, 828, 795, 795, 795, 795, 789, 825, 783, 759, 747, 753, 729, 729, 738, 753, 759, 930, 999, 984,
  891, 813, 744, 738, 696, 657, 672, 651, 654, 585, 642, 945, 894, 894, 846, 882, 876, 891, 894, 933, 930, 930,
  960, 968, 918, 921, 909, 881, 876, 897, 939, 939, 944, 936, 909, 891, 897, 918, 891, 801, 762, 753, 702, 660,
  708, 750, 825, 624, 591, 588, 618, 585, 525, 564, 549, 540, 540, 543, 543, 534, 534, 507, 513, 531, 537, 534,
  519, 504, 498, 486, 489, 513, 519, 501, 483, 432, 411, 465, 465, 447, 411, 396, 387, 449, 444, 432, 429, 396,
  393, 375, 327, 315, 369, 363, 381, 369, 354, 354, 354, 333, 360, 354, 354, 345, 333, 330, 330, 342, 369, 399,
  393, 366, 336, 381, 405, 414, 405, 363, 342, 294, 264, 198, 207, 153, 105, 87, 144, 117, 123
];

// HILOW trail: red above the price, green below
[
  ['#ff0000', '0,273 5,264 14,264 17,267 20,275 22,285 25,300 28,318 31,338 34,357'],
  ['#00ff00', '35,437 39,455 44,472 49,483 56,483 61,470 65,453 70,430 75,410 80,390 85,373 89,360 92,350'],
  ['#ff0000', '93,312 98,304 105,302'],
  ['#00ff00', '106,339 116,339 124,342 131,344'],
  ['#ff0000', '132,306 136,298 140,293 145,300 150,315 155,340 160,375 164,410 169,462 174,515 178,552 183,597 188,640 193,685 198,730 203,778 208,828 213,882 217,925 221,963'],
  ['#00ff00', '222,1035 225,1057 228,1074 232,1092 237,1104 241,1108 245,1102 250,1085 255,1068 260,1048 265,1027 270,1003 272,992'],
  ['#ff0000', '273,936 274,933'],
  ['#00ff00', '275,976 279,960 285,930'],
  ['#ff0000', '286,870 288,855'],
  ['#00ff00', '289,902 291,893'],
  ['#ff0000', '292,832 295,816 299,804 303,797 307,791 311,789 314,792'],
  ['#00ff00', '315,857 319,870 324,880 328,883 331,880 335,867 339,847 344,812 349,765 354,711 359,657 364,607 370,555 374,527 379,496 384,470 389,448 394,429 399,407 403,392']
].forEach(function (s) {
  var pts = pairs(s[1]);
  jagged(P1, pts, s[0]);
  for (var i = pts[0][0]; i <= pts[pts.length - 1][0]; i++) {
    el('rect', { x: bx(i) - 1.5, y: Math.round(py(P1, at(pts, i))) - 2, width: 3, height: 4, fill: s[0] });
  }
});

jagged(P1, price.map(function (v, i) { return [i, v]; }), '#6666ff');
price.forEach(function (v, i) {
  if (i === 47 || i === 320) return;
  el('rect', { x: bx(i) - 1.5, y: Math.round(py(P1, v)) - 2, width: 3, height: 4, fill: '#00ffff' });
});

// strategy signals: bar, arrow top, label baseline
[[3, 254, 244], [100, 228, 218], [136, 253, 243], [299, 397, 387]].forEach(function (s) {
  var x = bx(s[0]), y = s[1];
  el('path', { d: 'M' + (x - 2) + ' ' + y + 'h4v9h3l-5 7l-5-7h3z', fill: '#ff0000' });
  el('path', { d: 'M' + (x - 6) + ' ' + (py(P1, price[s[0]]) - 4) + 'l5 4l-5 4z', fill: '#ff0000' });
  el('text', { x: x, y: s[2], 'text-anchor': 'middle', 'class': 'mark' }, '-1');
});
[[46, 238, 268], [116, 224, 254], [237, 432, 462], [319, 355, 385]].forEach(function (s) {
  var x = bx(s[0]), y = s[1];
  el('path', { d: 'M' + (x - 1) + ' ' + (y + 13) + 'h2v-8h3l-4-5l-4 5h3z', fill: '#00ff00' });
  el('path', { d: 'M' + (x - 6) + ' ' + (py(P1, price[s[0]]) - 3) + 'l4 3l-4 3z', fill: '#00ff00' });
  el('text', { x: x, y: s[2], 'text-anchor': 'middle', 'class': 'mark' }, '1');
});
el('text', { x: 1838, y: 430, 'text-anchor': 'end', 'font-size': 20, fill: '#808000' }, '22905.000');

/* ---------- Leo chart ---------- */
var P2 = 550;
for (b = 17; b <= 433; b += 32) vline(bx(b), 579, 773, '#008080', '18 6');
hline(594.5, '#ff0000');
hline(636.5, '#808000');
hline(678.5, '#0000ff', 0, '3 2');
hline(687.5, '#800080');
hline(719.5, '#808000');

smooth(P2, pairs(`0,640 2,637 4.6,627 8,605 12,565 15,520 18,480 21.5,435 26,380 29,340 32,303 35,280 39,265 45,261
49,262 53,272 57,280 61.5,295 64.6,313 68,340 72,380 76,412 81,432 85.6,450 92,460 102.5,463 106,470 110,485
114,510 118,538 123.5,565 129,585 135,593 142,615 145,615 150.6,612 154.7,605 158.8,585 165,543 170,515 175,492
180,482 185,470 189.4,447 193.5,405 197.6,355 201.6,295 205.7,235 209.8,180 212.9,147 216,128 220,121 224,124
228,135 233,148 241.4,157 246.5,178 252.7,208 258.8,245 265,310 273,410 280,500 283.3,538 286.3,555 290,569
294,563 299.4,510 305,440 310,375 317.5,288 322,250 326,228 331,222 337,235 343,280 351,350 358,412 364,455
369,469 371,469`), '#008080');
smooth(P2, pairs(`0,547 4.6,583 10,615 15,631 18.5,635 22,631 25.7,618 30,595 34,563 39,512 44.6,450 49,403 54,350
59.4,300 64.6,265 70,249 74.6,246 81,261 88,296 96,355 106,418 115,465 125.7,507 135,538 144.4,570 152.7,595
160,613 168,619 177,600 187,563 197.6,505 210,410 221,297 231,200 241.4,127 247.6,102 252.7,97 258.8,105 266,135
273,188 281,265 289.4,358 299.4,460 305,508 310,527 314.4,533 318,530 322,512 329,450 337,378 345,305 351,265
357.5,249 364,260 369,285 371,298`), '#ffff00');
smooth(P2, pairs(`0,661 4,668 8,662 12,640 16,605 21.5,550 26.7,485 32,410 38,335 44.6,280 50,240 54,220 58,214
63.6,225 69,262 74,310 80.4,355 87.8,410 95,457 101.5,482 106,488 113,518 120.4,543 129,567 135,585 139.4,608
145,625 149.6,631 155,631 160,622 165,600 171,563 177,530 184,500 190.4,460 197.6,385 204.7,300 214,198 221,140
227,105 233.3,82 239,73 242.5,75 249.6,118 256.7,168 264,238 273,350 280,430 286,503 291.4,550 295.5,570
299.7,571 305,548 310,512 315.4,450 322,367 329,285 337,226 342,213 348,230 354.4,275 361,335 367,393
371,425`), '#ffff00', '4 4');
hline(761.5, '#ff0000');
jagged(P2, pairs(`0,460 1,617 2,495 3,495 4,475 5,479 6,467 7,432 8,440 10,418 11,421 12,417 13.5,421 15,445 17,473
18,481 20,463 21,463 22,437 24,478 25,450 26,508 27,447 28,446 29,475 30,462 31,489 32,485 33,460 34,385 36,355
37,355 38,332 40,360 42.5,364 44,357 46,358 47,380 48,396 49,397 51,368 53,360 56,330 58,341 59,335 60,347 62,303
63,297 64,318 65,308 67,252 68,271 69,265 70,266 72,297 73,290 75,297 77,310 78,342 79,350 81.5,330 82,328 83,345
84,328 86,330 87,319 88,328 89,349 90,332 91,350 93,397 95,376 96,385 97,428 98,475 99,485 100,503 102,560 103,577
104,568 105,530 106,215 107,245 108,257 109,257 111,310 112,370 113,374 114,370 115,383 116,358 117,357 118,332
119,322 120,342 121,337 122,340 123,362 125,338 126,334 127,350 129,370 130,405 131,412 133,445 134,480 135,517
136,508 137,520 138,570 139,568 140,547 141,608 142,587 143,600 144,650 145,550 146,557 147,525 148,560
149.5,560 151,577 152,545 153,503 154,500 155,477 156,482 157,503 160,515 161,528 162,510 164,496 165,540 167,540
168,588 169,604 170.5,595 172,600 173,538 174.5,535 175,530 176,575 177,595 178,535 179,595 180,600 181,620
183,631 185,590 186,558 188,597 189,573 191,588 192,633 193.5,610 195,588 196,588 197,553 198,547 199,583 200,543
201,545 202,530 203,558 206,560 207,597 208,577 209,590 210,595 211,605 213,555 214,492 215,480 216,475 217,502
218,465 219,425 220,411 221,415 222,376 223,393 224,400 225,415 226,412 228,385 230,387 231,408 232,412 233,387
234,370 236,333 238,308 240,283 241,337 242,297 243,295 244,337 245,360 246,385 247,410 248,412 249,400 249.6,404
250.4,346 251.4,352 252.5,337 254,297 255,260 256,228 257,205 258,217 259,232 261,240 262,260 263.4,238 265,210
266,220 267,200 268.5,198 269.5,208 270.3,215 271,230 272,350 273,407 274,400 275,335 277,268 278,250 280,208
281,222 282,213 283,214 284,187 285,240 286,410 287,387 288,388 289,365 290,385 291.5,385 293,400 294,415 296,415
297,432 298,440 299,410 300,410 301,405 303,388 304,402 305,427 307,431 308,425 309.7,402 310.7,403 312,418
313,402 314,360 315,337 316,332 317,308 318,292 319,320 320,345 321,382 322,273 323,262 324,257 325,274 326,258
327,220 328,246 330.7,245 332,260 333,263 334,246 336,240 337,227 338,233 341,233 342,227 345,233 346,250 347,237
348,230 349,200 350,140 351,125 352,176 354,172 355,142 356,150 357,170 358,220 359,220 360,185 361,195 362,168
363,178 365,148 366,145 367,207 368,210 369,237 370,247 372,240 374,208 376,243 378,247 379.3,232 381,240 382,262
384,330 385,322 387,245 389,340 390,357 391,354 392,297 393,265 394,233 395,215 396,168 397,190 398,130 399,102
400,92 401,143 402,138 403,158`), '#00ffff');
el('line', { x1: 927, y1: 751.5, x2: 1838, y2: 646, stroke: '#ff00ff' });

/* ---------- CCI / velocity ---------- */
var P3 = 770;
var cci = pairs(`0,265 1,285 2,345 4,380 6.5,455 10,492 13,527 16,523 17,503 20.4,490 23.6,481 27,498 30,503 32,511
33.5,508 35,485 38,440 42.5,383 45.7,345 48,317 49,310 54,308 57.3,295 61,278 64.6,240 67.8,200 71,168 76.7,170
78.3,177 81.5,210 86,247 91,268 96.7,293 98.3,315 102,420 104,490 106,540 107,470 109.4,430 112,400 114,390 116,345
118.3,270 121,203 122.5,235 124.6,262 126.7,275 130.4,275 133,295 135,345 138.3,430 142,540 143,575 144.5,615
146,630 148.6,650 150.6,656 152.7,648 155,610 157.8,570 160.3,543 165,518 168,511 170.5,525 173,538 176.6,532
180,537 183.3,550 188.4,552 191.4,565 195,587 197,592 201.6,578 206.7,558 213.7,541 216,520 219,508 222,480 226,430
230,385 232.5,379 237,350 240,310 243.5,265 245.5,265 250,275 251,262 255,265 257.3,240 260.8,195 263.4,145
265.4,105 269,72 271.5,73 273,105 274.6,150 277,175 284,174 286,167 287,203 288.4,212 291.4,203 293.5,225 296,280
299.5,362 301,392 304.4,388 309,415 313.3,410 316,380 320,325 322,315 323.3,275 326,225 329,158 332,128 334.4,127
337.5,107 340.7,118 347.5,152 352.3,160 355,170 358,166 360,178 370,182 373.3,190 374.4,184 381.7,187 386,207
388,203 393,236 396.5,215 399.6,155 401,128 403,111`);
for (b = 0; b <= LAST; b++) vline(bx(b), py(P3, 348), py(P3, at(cci, b)), '#484848');
hline(820.5, '#808080');
hline(896.5, '#008080');
hline(952.5, '#808080');

smooth(P3, pairs(`0.2,615 1.5,640 3.6,655 22.5,655 30,650 34,648 36.2,625 40,565 45,480 49,385 54,275 57.3,165 60,95
62,70 64,70 67.8,84 71.5,71 79.4,70 82,85 87.8,130 93,180 96.2,235 100.4,325 103.6,400 105.7,423 107.8,422 110.4,405
112.5,430 115,500 116.7,545 118.8,558 124.6,532 129.9,500 132.5,497 134.6,512 137.2,560 139.9,615 141.4,652
143.5,656 173,655 177.7,640 184.8,655 187.9,652 191.4,635 196.5,613 200.6,600 205.7,598 207.8,613 210.8,650 213,656
215,648 217,605 219,540 221,420 222.6,270 224,150 225.6,90 226.6,71 228,71 272,71 275,100 278.2,127 282.3,120
286,99 291.4,150 295.5,215 298.6,300 302.3,420 305,530 307,625 308.6,654 317.5,654 320,645 322.3,610 326,520
331.2,370 334,270 337,165 340.7,110 343.3,75 345,71 358,70 360,82 365,110 368.6,120 371.8,160 375,205 378.6,265
383.8,310 386,360 389,420 391.8,480 394.4,570 396,625 398,632 400.7,590 403,555`), '#cc6600', '3 2');

var vel = pairs(`0,448 2,360 4,310 6.5,300 9,318 12,385 14.6,430 17.3,440 20.4,420 23,365 25.7,285 29,253 32,275
35,335 38.3,390 42,410 46.7,378 52,333 54.6,340 57.8,395 61.5,465 64.6,491 67.8,470 71,400 74,325 77.8,295 80.4,310
84.6,385 89,480 92,505 95,480 99.4,395 103.6,348 106.7,353 110,377 113,358 117.3,310 121.5,268 125.7,202 129,245
132,350 136.2,520 140.4,615 143.3,636 146,600 148.6,520 151.6,410 155.7,260 159.8,135 163.4,96 166,110 169,185
172,330 175,470 178.2,570 181.2,602 184.3,575 188.4,460 192.5,335 196.5,294 200.6,325 204.7,340 213,347 219,348
225,368 230.2,373 235.3,355 239.4,375 245.5,430 251.6,477 255.7,468 261.9,390 267,300 272.5,238 275.6,270
279.2,370 282.3,460 285.8,518 289,527 292,505 296,400 299,320 301,309 304,335 307,375 310.7,391 314.4,375 318,305
321.8,240 325,225 329,260 333.3,340 337.5,445 340.7,505 344.4,530 349,508 354.4,430 358.6,350 361.8,307 366,301
370,325 374.4,380 378,427 381.8,431 386,415 392.3,412 396.5,398 399.6,370 403,318`);
smooth(P3, vel, '#0000ff');
// the fast line leads the slow one by two bars
smooth(P3, vel.slice(1).map(function (p) { return [p[0] - 2, 365 + (p[1] - 365) * 1.03]; }), '#ff0000', '4 4');
jagged(P3, pairs(`0,262 1,275 2,302 3,300 4,320 5,323 7,375 8,425 9,460 10,432 12,443 13.5,432 15,452 16,440 17,395
18,370 19.4,300 20,268 21,268 22,245 24,233 25,250 26,252 28,275 29.5,310 31,350 32,400 34,415 35.7,418 37,405
38,417 39.4,390 40.4,397 42.5,365 44,350 45,317 46.4,330 47.6,325 49.4,338 51.5,345 53,390 54.6,440 57.3,492
59.4,495 61,508 62,480 63,483 65.7,430 66.7,370 68.3,320 70,293 71.5,275 73,277 75.7,305 79,350 80.4,420 82,460
83,458 84.6,500 86.2,530 87.3,520 89.4,513 91,462 93,440 95,395 98.3,335 100,325 101,345 102.5,353 103.6,380
105,405 106,410 107,365 108,348 109,355 110.4,315 112,290 114,303 115,305 117,248 119,217 120.4,175 122,160
123.6,175 124.6,200 125,290 126.7,370 127.8,430 129.4,495 132,545 134.6,605 136,650 137,656 139.4,657 141,605
142.3,595 143,560 144,520 145,497 147,410 149.6,325 151.6,230 153,185 154.2,125 156.2,85 157.8,70 159,100 160,85
161.3,118 163,125 165,205 167,320 169,440 171,530 172.6,585 174,610 176,630 178.2,610 179.7,565 181.2,540 183,505
184.3,440 185.8,395 186.8,335 188.4,297 189.4,290 191,262 192.5,295 194,315 196,320 197,353 200,350 201,330
202.7,333 204,328 205.2,358 206.2,343 207.6,358 210.8,335 214,360 215,328 216.4,347 218.5,345 220,365 221.5,373
223,370 225,392 226,370 227.5,378 230,333 232,337 232.8,370 235.8,397 238,420 240,422 241,458 243,440 245.5,480
248,498 250,485 251,450 253.7,425 257.3,390 258.3,390 259.3,342 260.8,340 262.9,290 265,235 267.5,217 268.5,235
270.5,242 272,290 273.6,370 275,440 277,495 280,530 281.2,523 283.3,538 285,510 286.8,523 288,510 290,470
291.4,370 293,290 294.2,280 296.5,293 299,350 301,385 302.8,412 304,415 305,380 306.5,380 309,400 311.8,350
314.4,275 316,232 319,200 320.7,215 322.8,260 324.4,250 326,265 328.6,325 329.7,375 332,415 334.4,492 337,545
339,527 340,503 341.2,533 342.8,540 346,500 348.6,465 350.2,420 351.8,362 353,355 355.5,310 357.2,285 359,282
362.8,320 365,333 366,315 367.8,340 370,423 371.2,405 372.5,410 376,462 377.6,428 381.8,398 382.8,400 385,443
388,385 389.7,408 393,410 396,365 398,320 400,280 401.8,245 403,207`), '#008080');

// CCI line, recoloured where it leaves the +-120 band
var zone = function (v) { return v < 151 ? '#ff0000' : v > 547 ? '#00ffff' : '#b0b0b0'; };
var run = [[0, at(cci, 0)]];
for (b = 1; b <= LAST; b++) {
  var v = at(cci, b);
  run.push([b, v]);
  if (zone(v) !== zone(run[0][1]) || b === LAST) {
    jagged(P3, run, zone(run[0][1]));
    run = [[b, v]];
  }
}
[[82, 800, '#0ff'], [274, 800, '#0ff'], [361, 799, '#0ff'], [35, 983, 'red'], [191, 983, 'red'], [216, 980, 'red'],
  [321, 982, 'red']].forEach(function (d) {
  el('circle', { cx: bx(d[0]), cy: d[1], r: 4, fill: d[2] });
});

/* ---------- axes ---------- */
vline(LEFT, 89, 990, '#fff');
vline(RIGHT, 89, 990, '#fff');
[555.5, 774.5].forEach(function (y) {
  el('line', { x1: 2, x2: 80, y1: y, y2: y, stroke: '#fff' });
  el('line', { x1: 1840, x2: 1918, y1: y, y2: y, stroke: '#fff' });
});
el('line', { x1: 2, x2: 1918, y1: 990.5, y2: 990.5, stroke: '#fff' });
el('line', { x1: 1, x2: 1, y1: 89, y2: 1018, stroke: '#888', 'stroke-width': 2 });
el('line', { x1: 1919, x2: 1919, y1: 89, y2: 1018, stroke: '#eee', 'stroke-width': 2 });
for (b = 10; b <= 435; b += 17) vline(bx(b), 991, 995, '#fff');
for (b = 34; b <= 430; b += 36) vline(bx(b), 991, 1001, '#fff');

axis(P1, [[31, '24200'], [175, '24000'], [322, '23800'], [466, '23600'], [610, '23400'], [757, '23200'],
  [901, '23000'], [1048, '22800'], [1192, '22600']], [31, 175, 322, 466, 610, 757, 901, 1048, 1192]);
axis(P2, [[196, '6.00'], [322, '2.00'], [446, '-2.00'], [571, '-6.00']], [133, 196, 259, 322, 385, 446, 508, 571, 634]);
axis(P3, [[185, '100.00'], [350, '0.00'], [515, '-100.00', '-100....']], [100, 185, 266, 350, 434, 515, 598]);

tag(141, '#6666ff', '24075');
tag(231, '#00ff00', '23704');
tag(585, '#ff0000', '8.00');
tag(594, '#00ffff', '7.16');
tag(627, '#666600', '4.00');
tag(669, '#0000ff', '0.00');
tag(710, '#666600', '-4.00');
tag(752, '#ff0000', '-8.00');
tag(811, '#808080', '120.00');
tag(797, '#ff0000', '144.49');
tag(943, '#808080', '-120.00');

[[124, '12:15'], [225, '5/03'], [369, '5/04'], [513, '5/05'], [657, '5/06'], [736, '14:30'], [801, '5/09'],
  [872, '14:00'], [945, '5/10'], [1008, '13:30'], [1089, '5/11'], [1144, '13:00'], [1233, '5/12'], [1377, '5/13'],
  [1521, '5/16'], [1665, '5/17']].forEach(function (t) {
  el('text', { x: t[0], y: 1014, 'class': 'axis' }, t[1]);
});

/* ---------- legends ---------- */
legend(106, [[82, '#6666ff', 'GS:FTSEMIB - 15 min'], [258, '#6666ff', 'MCEDB'], [327, '#fff', '05/17/2022'],
  [418, '#0f0', 'L=24075.000'], [523, '#fff', 'Hi=24140.000'], [634, '#fff', 'Lo=23820.000'],
  [748, '#0f0', 'C=24075.000'], [856, '#fff', 'Close'], [915, '#0ff', '24075.000'], [1001, '#fff', 'HILOW Alert'],
  [1111, '#0f0', '23704.044'], [1197, '#fff', 'Strategy'], [1276, '#fff', 'Leo Velo Chart'],
  [1403, '#008080', '0.0608'], [1462, '#f00', '0.1082'], [1521, '#00f', '0.1299'], [1580, '#008080', '0.0000']]);
legend(571, [[82, '#fff', 'Leo Chart'], [172, '#0ff', '7.16'], [213, '#f00', '8.00'], [254, '#f00', '-8.00'],
  [301, '#808000', '4.00'], [342, '#808000', '-4.00'], [389, '#00f', '0.00'], [430, '#fff', 'Macd ciclico 2'],
  [581, '#800080', '0.00']]);
legend(790, [[82, '#fff', 'CCI Smothing ekam'], [247, '#f00', '144.49'], [306, '#808080', '120.00'],
  [364, '#808080', '-120.00'], [430, '#404040', '144.49'], [488, '#fff', 'Leo Velo Chart'], [615, '#008080', '0.92'],
  [656, '#f00', '0.47'], [697, '#00f', '0.33'], [738, '#008080', '0.00'], [779, '#fff', 'Stoc colore'],
  [898, '#cc6600', '-0.64']]);
```
